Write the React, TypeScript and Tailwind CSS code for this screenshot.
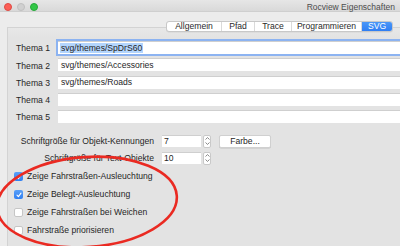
import React from "react";

function Stepper() {
  return (
    <div className="w-[8px] h-[13px] rounded-[2px] bg-white border border-[#c9c9c9] flex flex-col items-center justify-center gap-[2px]">
      <svg width="5" height="3" viewBox="0 0 5 3"><path d="M0.5 2.5 L2.5 0.6 L4.5 2.5" fill="none" stroke="#6b6b6b" strokeWidth="0.8" /></svg>
      <svg width="5" height="3" viewBox="0 0 5 3"><path d="M0.5 0.5 L2.5 2.4 L4.5 0.5" fill="none" stroke="#6b6b6b" strokeWidth="0.8" /></svg>
    </div>
  );
}

function Check({ on, label }: { on: boolean; label: string }) {
  return (
    <div className="h-[13px] flex items-center gap-[4px]">
      {on ? (
        <div className="w-[9px] h-[9px] rounded-[2px] bg-gradient-to-b from-[#5aa0f8] to-[#2f7ff2] flex items-center justify-center">
          <svg width="6" height="6" viewBox="0 0 6 6"><path d="M1 3.2 L2.4 4.6 L5 1.2" fill="none" stroke="white" strokeWidth="1.1" strokeLinecap="round" strokeLinejoin="round" /></svg>
        </div>
      ) : (
        <div className="w-[9px] h-[9px] rounded-[2px] bg-white border border-[#c6c6c6]" />
      )}
      <span>{label}</span>
    </div>
  );
}

export default function App() {
  const tabs = [
    { t: "Allgemein", w: 54 },
    { t: "Pfad", w: 33 },
    { t: "Trace", w: 37 },
    { t: "Programmieren", w: 70 },
    { t: "SVG", w: 31, sel: true },
  ];
  const themes = ["svg/themes/SpDrS60", "svg/themes/Accessories", "svg/themes/Roads", "", ""];
  return (
    <div className="relative w-[400px] h-[246px] overflow-hidden bg-[#ececec] font-['Liberation_Sans',Arial,sans-serif] text-[8.6px] text-[#262626] leading-none">
      {/* title bar */}
      <div className="h-[12px] flex items-center bg-gradient-to-b from-[#e6e6e6] to-[#d9d9d9] border-b border-[#cfcfcf]">
        <div className="flex gap-[5px] pl-[4px] pt-[2px]">
          <span className="w-[8px] h-[8px] rounded-full bg-[#fc5f57] border-[0.5px] border-[#de4a43]" />
          <span className="w-[8px] h-[8px] rounded-full bg-[#d0d0d0] border-[0.5px] border-[#c0c0c0]" />
          <span className="w-[8px] h-[8px] rounded-full bg-[#33c748] border-[0.5px] border-[#27a93a]" />
        </div>
        <div className="ml-auto pr-[5px] pt-[3px] text-[#4d4d4d] text-[8.5px]">Rocview Eigenschaften</div>
      </div>

      {/* tabs */}
      <div className="relative z-10 mt-[9px] flex justify-end pr-[7px]">
        <div className="flex h-[11px] rounded-[3px] border border-[#c8c8c8] bg-white overflow-hidden shadow-[0_0.5px_0.5px_rgba(0,0,0,0.08)]">
          {tabs.map((tb, i) => (
            <div
              key={tb.t}
              style={{ width: tb.w }}
              className={
                "flex items-center justify-center " +
                (i > 0 ? "border-l border-[#dadada] " : "") +
                (tb.sel ? "bg-gradient-to-b from-[#4b97f8] to-[#2f7ef3] text-white" : "text-[#2a2a2a]")
              }
            >
              {tb.t}
            </div>
          ))}
        </div>
      </div>

      {/* panel */}
      <div className="-mt-[5px] ml-[7px] w-[420px] h-[240px] border-t border-l border-[#d3d3d3] bg-[linear-gradient(#e8e8e8_0px,#e3e3e3_9px)] pt-[13px]">
        <div className="flex flex-col gap-[4.3px]">
          {themes.map((v, i) => (
            <div key={i} className="flex items-center h-[13px]">
              <div className="w-[42px] text-right pt-[2px]">Thema {i + 1}</div>
              <div
                className={
                  "ml-[8px] flex-1 h-[13px] bg-white border-t border-[#cfcfcf] flex items-center pl-[2px] " +
                  (i === 0 ? "ring-2 ring-[#8cb3f1]" : "")
                }
              >
                {i === 0 ? (
                  <span className="bg-[#b3d5fd] h-[10px] flex items-center px-[1px]">{v}</span>
                ) : (
                  <span className="pl-[1px]">{v}</span>
                )}
              </div>
            </div>
          ))}
        </div>

        <div className="mt-[11.5px] flex flex-col gap-[4px]">
          <div className="flex items-center h-[13px]">
            <div className="w-[146px] text-right">Schriftgröße für Objekt-Kennungen</div>
            <div className="ml-[8px] w-[39px] h-[12px] bg-white border-t border-[#cfcfcf] flex items-center pl-[2px]">7</div>
            <div className="ml-[2px]"><Stepper /></div>
            <div className="ml-[8px] w-[52px] h-[13px] bg-white rounded-[2px] border border-[#d0d0d0] shadow-[0_0.5px_0.5px_rgba(0,0,0,0.15)] flex items-center justify-center">Farbe...</div>
          </div>
          <div className="flex items-center h-[13px]">
            <div className="w-[146px] text-right">Schriftgröße für Text-Objekte</div>
            <div className="ml-[8px] w-[39px] h-[12px] bg-white border-t border-[#cfcfcf] flex items-center pl-[2px]">10</div>
            <div className="ml-[2px]"><Stepper /></div>
          </div>
        </div>

        <div className="mt-[5.5px] pl-[6px] flex flex-col gap-[5px]">
          <Check on label="Zeige Fahrstraßen-Ausleuchtung" />
          <Check on label="Zeige Belegt-Ausleuchtung" />
          <Check on={false} label="Zeige Fahrstraßen bei Weichen" />
          <Check on={false} label="Fahrstraße priorisieren" />
        </div>
      </div>

      {/* red hand-drawn ellipse */}
      <svg className="absolute inset-0 pointer-events-none" width="400" height="246" viewBox="0 0 400 246">
        <ellipse cx="87" cy="202" rx="90" ry="45" transform="rotate(-4 87 202)" fill="none" stroke="#ea2a22" strokeWidth="2.6" />
      </svg>
    </div>
  );
}
